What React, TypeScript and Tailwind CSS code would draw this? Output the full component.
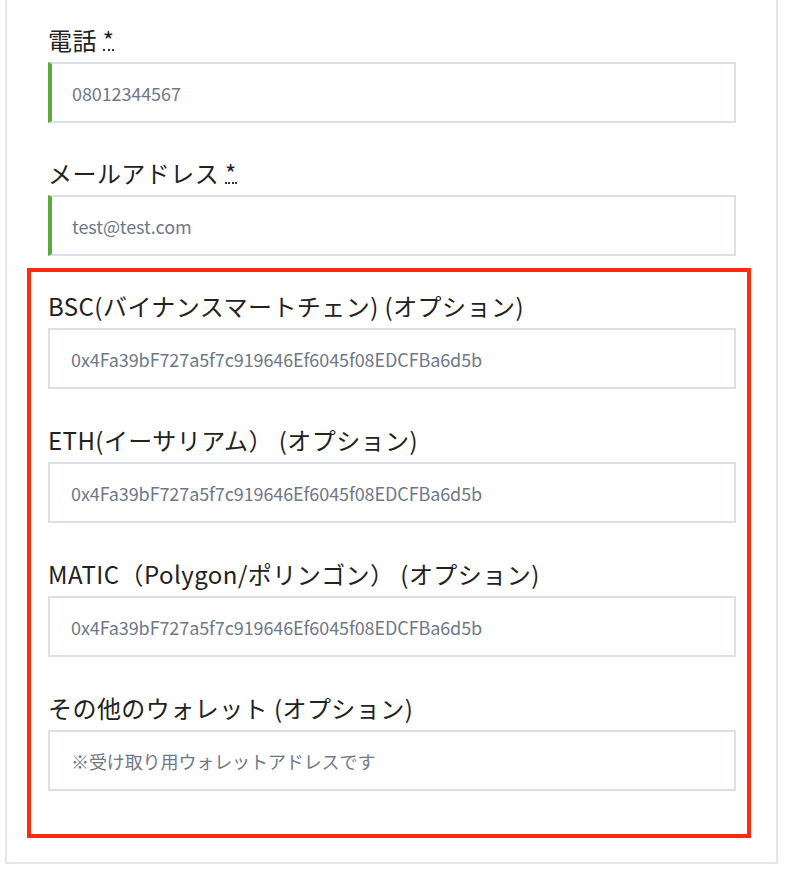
import React from 'react';

const FONT = "font-['Noto_Sans_CJK_JP','Noto_Sans',sans-serif]";

interface FieldProps {
  label: string;
  required?: boolean;
  value?: string;
  placeholder?: string;
  valid?: boolean;
}

const Field = ({ label, required, value, placeholder, valid }: FieldProps) => {
  return <div>
      <label className="block h-[32px] text-[24px] leading-[32px] tracking-[0.45px] text-[#222222] whitespace-nowrap">
        {label}
        {required && <>
            {' '}
            <abbr title="必須" className="no-underline relative">
              *
              <span className="absolute left-0 right-0 top-[27px] border-b-2 border-dotted border-[#333333]" />
            </abbr>
          </>}
      </label>
      <input readOnly defaultValue={value} placeholder={placeholder} className={`mt-[6px] block w-full h-[61px] bg-white border-2 border-[#dadfe9] text-[18px] tracking-[-0.1px] text-[#6f7888] placeholder:text-[#6f7888] outline-none ${valid ? 'border-l-4 border-l-[#5aab3b] pl-[20px]' : 'pl-[21px]'}`} />
    </div>;
};

export default function App() {
  return <div className={`bg-white min-h-[876px] ${FONT}`}>
      <div className="ml-[5px] w-[773px] border-x-2 border-b-2 border-[#e2e6ee] pl-[41px] pr-[40px] pt-[24px] pb-[24px]">
        <div className="flex flex-col gap-[34px]">
          <Field label="電話" required value="08012344567" valid />
          <Field label="メールアドレス" required value="test@test.com" valid />
        </div>
        <div className="mt-[12px] -ml-[21px] -mr-[15px] border-4 border-[#ff2a10] pl-[17px] pr-[11px] pt-[18px] pb-[43px] flex flex-col gap-[35px]">
          <Field label="BSC(バイナンスマートチェン) (オプション)" placeholder="0x4Fa39bF727a5f7c919646Ef6045f08EDCFBa6d5b" />
          <Field label="ETH(イーサリアム） (オプション)" placeholder="0x4Fa39bF727a5f7c919646Ef6045f08EDCFBa6d5b" />
          <Field label="MATIC（Polygon/ポリンゴン） (オプション)" placeholder="0x4Fa39bF727a5f7c919646Ef6045f08EDCFBa6d5b" />
          <Field label="その他のウォレット (オプション)" placeholder="※受け取り用ウォレットアドレスです" />
        </div>
      </div>
    </div>;
}
